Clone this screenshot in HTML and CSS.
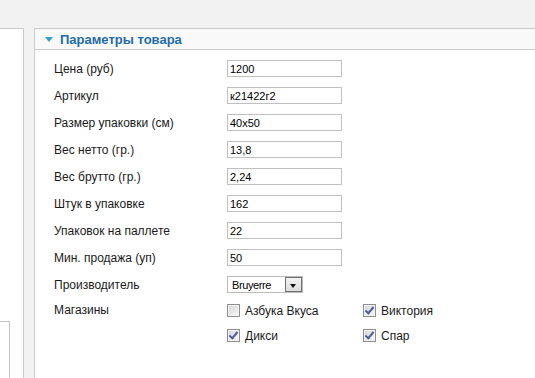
FILE: index.html
```html
<!DOCTYPE html>
<html lang="ru">
<head>
    <meta charset="UTF-8">
    <title>Параметры товара</title>
    <link rel="stylesheet" href="styles.css">
</head>
<body>
<div class="layout">
    <div class="sidebar">
        <div class="sidebar-box"></div>
    </div>

    <div class="panel">
        <div class="panel-head">
            <span class="toggle"></span>
            <h2>Параметры товара</h2>
        </div>

        <div class="form">
            <div class="row">
                <label for="price">Цена (руб)</label>
                <input type="text" id="price" value="1200">
            </div>
            <div class="row">
                <label for="sku">Артикул</label>
                <input type="text" id="sku" value="к21422г2">
            </div>
            <div class="row">
                <label for="pack">Размер упаковки (см)</label>
                <input type="text" id="pack" value="40x50">
            </div>
            <div class="row">
                <label for="net">Вес нетто (гр.)</label>
                <input type="text" id="net" value="13,8">
            </div>
            <div class="row">
                <label for="gross">Вес брутто (гр.)</label>
                <input type="text" id="gross" value="2,24">
            </div>
            <div class="row">
                <label for="qty">Штук в упаковке</label>
                <input type="text" id="qty" value="162">
            </div>
            <div class="row">
                <label for="pallet">Упаковок на паллете</label>
                <input type="text" id="pallet" value="22">
            </div>
            <div class="row">
                <label for="minsale">Мин. продажа (уп)</label>
                <input type="text" id="minsale" value="50">
            </div>
            <div class="row">
                <label>Производитель</label>
                <div class="select">
                    <span class="select-value">Bruyerre</span>
                    <span class="select-btn"></span>
                </div>
            </div>
            <div class="row row-shops">
                <label>Магазины</label>
                <div class="shops">
                    <span class="check"><span class="box"></span>Азбука Вкуса</span>
                    <span class="check"><span class="box checked"></span>Виктория</span>
                    <span class="check"><span class="box checked"></span>Дикси</span>
                    <span class="check"><span class="box checked"></span>Спар</span>
                </div>
            </div>
        </div>
    </div>
</div>
</body>
</html>
```

FILE: styles.css
```css
* {
    box-sizing: border-box;
}

html, body {
    margin: 0;
    padding: 0;
    height: 100%;
    overflow: hidden;
}

body {
    background-color: #f2f2f2;
    font-family: "Liberation Sans", Arial, sans-serif;
    font-size: 12px;
    color: #1a1a1a;
}

.layout {
    display: flex;
    gap: 10px;
    padding-top: 28px;
    height: 100%;
}

.sidebar {
    display: flex;
    flex-direction: column;
    width: 24px;
    flex: none;
    background-color: #fff;
    border-top: 1px solid #cccccc;
    border-right: 1px solid #cccccc;
    padding-top: 292px;
}

.sidebar-box {
    flex: 1;
    width: 10px;
    border-top: 1px solid #c4c4c4;
    border-right: 1px solid #c4c4c4;
}

.panel {
    flex: 1;
    margin-right: -20px;
    background-color: #fff;
    border-top: 1px solid #cccccc;
    border-left: 1px solid #cccccc;
}

.panel-head {
    display: flex;
    align-items: center;
    height: 21px;
    padding-left: 10px;
    background-color: #f9f9f9;
    border-bottom: 1px solid #cccccc;
}

.toggle {
    width: 0;
    height: 0;
    border-left: 4.5px solid transparent;
    border-right: 4.5px solid transparent;
    border-top: 5px solid #2f9fd6;
    margin-top: 1px;
}

.panel-head h2 {
    margin: 0 0 0 7px;
    font-size: 13px;
    font-weight: bold;
    color: #1f6ca8;
}

.form {
    padding: 10px 0 0 19px;
}

.row {
    display: flex;
    align-items: center;
    height: 17px;
    margin-bottom: 10px;
}

.row label {
    width: 173px;
    flex: none;
}

.row input {
    width: 115px;
    height: 17px;
    margin: 0;
    padding: 0 2px;
    border: 1px solid #c0c0c0;
    font-family: "Liberation Sans", Arial, sans-serif;
    font-size: 11px;
    color: #000;
    outline: none;
}

.select {
    display: flex;
    align-items: center;
    justify-content: space-between;
    width: 76px;
    height: 17px;
    padding-left: 4px;
    border: 1px solid #bbbbbb;
    font-size: 11px;
    letter-spacing: -0.4px;
    color: #000;
}

.select-btn {
    position: relative;
    width: 17px;
    height: 15px;
    border: 1px solid #707070;
    background: linear-gradient(#f4f4f4, #dcdcdc);
}

.select-btn::after {
    content: "";
    position: absolute;
    left: 4px;
    top: 6px;
    border-left: 3.5px solid transparent;
    border-right: 3.5px solid transparent;
    border-top: 4px solid #111;
}

.row-shops {
    align-items: flex-start;
    height: auto;
}

.row-shops label {
    line-height: 15px;
}

.shops {
    display: grid;
    grid-template-columns: 136px 136px;
    row-gap: 10px;
}

.check {
    display: flex;
    align-items: center;
    gap: 5px;
    height: 15px;
    font-size: 12px;
}

.box {
    position: relative;
    width: 13px;
    height: 13px;
    border: 1px solid #8f8f8f;
    background: linear-gradient(135deg, #d6d6d6, #f6f6f6);
    box-shadow: inset 0 0 0 1px #f4f4f4;
}

.box.checked::after {
    content: "";
    position: absolute;
    left: 3px;
    top: 0px;
    width: 3px;
    height: 7px;
    border-right: 2px solid #4a5f98;
    border-bottom: 2px solid #4a5f98;
    transform: rotate(40deg);
}
```
